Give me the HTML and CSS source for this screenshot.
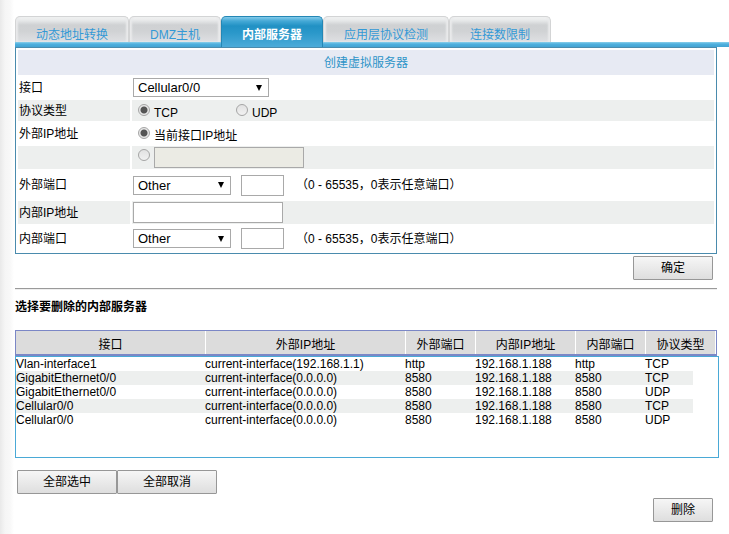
FILE: index.html
```html
<!DOCTYPE html>
<html lang="zh-CN">
<head>
  <meta charset="UTF-8" />
  <meta name="viewport" content="width=device-width, initial-scale=1.0"/>
  <title>内部服务器</title>
  <link rel="stylesheet" href="styles.css">
</head>
<body>
  <nav class="tabs">
    <a class="tab" href="#nat">动态地址转换</a>
    <a class="tab" href="#dmz">DMZ主机</a>
    <a class="tab active" href="#server">内部服务器</a>
    <a class="tab" href="#alg">应用层协议检测</a>
    <a class="tab" href="#limit">连接数限制</a>
  </nav>

  <main class="content">
    <form id="serverForm">
      <div class="panel">
        <h1 class="panel-title">创建虚拟服务器</h1>

        <div class="row">
          <label class="name" for="iface">接口</label>
          <div class="value">
            <select class="select wide" id="iface"><option>Cellular0/0</option></select>
          </div>
        </div>
        <div class="row shaded" role="radiogroup" aria-labelledby="protoName">
          <span class="name" id="protoName">协议类型</span>
          <div class="value">
            <label class="choice protocol"><input class="radio" type="radio" name="proto" checked><span class="choice-text">TCP</span></label>
            <label class="choice"><input class="radio" type="radio" name="proto"><span class="choice-text">UDP</span></label>
          </div>
        </div>
        <div class="row" role="group" aria-labelledby="extIpName">
          <span class="name" id="extIpName">外部IP地址</span>
          <div class="value">
            <label class="choice"><input class="radio" type="radio" name="extip" checked><span class="choice-text">当前接口IP地址</span></label>
          </div>
        </div>
        <div class="row shaded">
          <span class="name"></span>
          <div class="value">
            <div class="choice">
              <input class="radio" type="radio" name="extip" aria-label="外部IP地址">
              <input class="text" type="text" aria-label="外部IP地址" disabled>
            </div>
          </div>
        </div>
        <div class="row tall">
          <label class="name" for="extPort">外部端口</label>
          <div class="value">
            <select class="select" id="extPort"><option>Other</option></select>
            <input class="text port" type="text" aria-label="外部端口">
            <span class="hint">（0 - 65535，0表示任意端口）</span>
          </div>
        </div>
        <div class="row shaded">
          <label class="name" for="innerIp">内部IP地址</label>
          <div class="value">
            <input class="text" type="text" id="innerIp">
          </div>
        </div>
        <div class="row last">
          <label class="name" for="innerPort">内部端口</label>
          <div class="value">
            <select class="select" id="innerPort"><option>Other</option></select>
            <input class="text port" type="text" aria-label="内部端口">
            <span class="hint">（0 - 65535，0表示任意端口）</span>
          </div>
        </div>
      </div>
      <div class="actions">
        <button class="btn" type="button">确定</button>
      </div>
    </form>

    <hr class="line">
    <h2 class="list-title">选择要删除的内部服务器</h2>

    <table class="list-head">
      <colgroup><col><col class="c-ip"><col class="c-port"><col class="c-inner"><col class="c-port"><col class="c-proto"></colgroup>
      <tr>
        <th>接口</th>
        <th>外部IP地址</th>
        <th>外部端口</th>
        <th>内部IP地址</th>
        <th>内部端口</th>
        <th>协议类型</th>
      </tr>
    </table>
    <div class="list-box">
      <table class="list">
        <colgroup><col><col class="c-ip"><col class="c-port"><col class="c-inner"><col class="c-port"><col class="c-last"></colgroup>
        <tr><td>Vlan-interface1</td><td>current-interface(192.168.1.1)</td><td>http</td><td>192.168.1.188</td><td>http</td><td>TCP</td></tr>
        <tr><td>GigabitEthernet0/0</td><td>current-interface(0.0.0.0)</td><td>8580</td><td>192.168.1.188</td><td>8580</td><td>TCP</td></tr>
        <tr><td>GigabitEthernet0/0</td><td>current-interface(0.0.0.0)</td><td>8580</td><td>192.168.1.188</td><td>8580</td><td>UDP</td></tr>
        <tr><td>Cellular0/0</td><td>current-interface(0.0.0.0)</td><td>8580</td><td>192.168.1.188</td><td>8580</td><td>TCP</td></tr>
        <tr><td>Cellular0/0</td><td>current-interface(0.0.0.0)</td><td>8580</td><td>192.168.1.188</td><td>8580</td><td>UDP</td></tr>
      </table>
    </div>

    <div class="select-actions">
      <button class="btn long" type="button">全部选中</button>
      <button class="btn long" type="button">全部取消</button>
    </div>
    <div class="actions">
      <button class="btn short" type="button">删除</button>
    </div>
  </main>
</body>
</html>
```
FILE: styles.css
```css
* {
  box-sizing: border-box;
}

body {
  margin: 0;
  padding: 16px 0 0 15px;
  background: linear-gradient(to right, #e9e9e9, #f5f5f5 5px, #f8f8f8 10px, #fff 14px);
  font-family: "Liberation Sans", Arial, "Noto Sans CJK SC", sans-serif;
  font-size: 12px;
  line-height: 16px;
  color: #000;
}

/* tabs */
.tabs {
  display: flex;
  height: 31px;
  background: linear-gradient(#8ccfeb, #4fb0de 2px, #43a3d3) bottom / 100% 5px no-repeat;
}

.tab {
  height: 26px;
  padding: 10px 20px 0;
  border: 1px solid #d3d4d5;
  border-width: 1px 1px 0;
  border-radius: 5px 5px 0 0;
  background: linear-gradient(#f6f6f6, #e4e6e7 4px, #cfd1d3 8px, #d0d2d4 14px, #dfe0e3);
  box-shadow: inset 2px 0 2px #e9eaeb, inset -2px 0 2px #e9eaeb;
  color: #3399d6;
  text-decoration: none;
  white-space: nowrap;
}

.tab.active {
  height: 31px;
  border-color: #2487b5;
  background: linear-gradient(#83cbea, #45a9d6 4px, #2191c4 9px, #2b98ca 16px, #4cabd9);
  box-shadow: none;
  color: #fff;
  font-weight: bold;
}

.content {
  margin-right: 12px;
}

/* form */
.panel {
  display: flex;
  flex-direction: column;
  gap: 2px;
  padding: 2px;
  border: 1px solid #4a8bad;
  background: #fff;
}

.panel-title {
  margin: 0;
  padding-top: 1px;
  background: #e7eaf3;
  color: #2e94c8;
  font-size: 12px;
  font-weight: normal;
  line-height: 24px;
  text-align: center;
}

.row {
  display: grid;
  grid-template-columns: 112px 1fr;
  gap: 2px;
  min-height: 21px;
}

.row.tall {
  min-height: 28px;
}

.row.last {
  min-height: 25px;
}

.name,
.value {
  display: flex;
  align-items: center;
  padding: 0 1px;
}

.shaded .name,
.shaded .value {
  background: #edefee;
}

.choice {
  display: flex;
  gap: 4px;
  padding-left: 5px;
}

.choice.protocol {
  width: 98px;
}

.choice-text {
  padding-top: 4px;
}

.radio {
  appearance: none;
  width: 12px;
  height: 12px;
  margin: 3px 0 0;
  border: 1px solid #a5a5a5;
  border-radius: 50%;
  background: linear-gradient(#e2e2e2, #f1f1f1);
}

.radio:checked {
  background: radial-gradient(circle, #555 0 3px, #e8e8e8 4px);
}

.select {
  appearance: none;
  width: 98px;
  height: 19px;
  padding: 0 4px;
  border: 1px solid #a9a9a9;
  border-radius: 0;
  background: #fff url("data:image/svg+xml,%3Csvg xmlns='http://www.w3.org/2000/svg' width='6' height='6'%3E%3Cpath d='M0 0h6L3 6z'/%3E%3C/svg%3E") right 6px center no-repeat;
  color: #000;
  font: 13px "Liberation Sans", Arial, sans-serif;
}

.select.wide {
  width: 136px;
}

.text {
  width: 150px;
  height: 21px;
  margin: 1px 0;
  padding: 1px 4px;
  border: 1px solid #a9a9a9;
  background: #fff;
  font: 13px "Liberation Sans", Arial, sans-serif;
}

.text:disabled {
  background: #ebebe4;
}

.text.port {
  width: 43px;
  margin-left: 10px;
}

.hint {
  margin-left: 12px;
}

/* buttons */
.actions {
  display: flex;
  justify-content: flex-end;
  padding: 2px 4px 0;
}

.btn {
  width: 80px;
  height: 24px;
  padding: 0;
  border: 1px solid #979797;
  border-radius: 1px;
  background: linear-gradient(#f6f6f6, #dedede);
  color: #000;
  font: inherit;
}

.btn.long {
  width: 100px;
}

.btn.short {
  width: 60px;
}

.select-actions {
  display: flex;
  padding: 12px 2px 2px;
}

/* server list */
.line {
  margin: 8px 0;
  border: 0;
  border-top: 1px solid #9a9a9a;
  border-bottom: 1px solid #eee;
}

.list-title {
  margin: 0 0 14px;
  font-size: 12px;
  line-height: 18px;
}

.list-head,
.list {
  table-layout: fixed;
  border-spacing: 0;
}

.list-head {
  width: 100%;
  border: 1px solid #7b87c6;
  border-bottom-width: 2px;
}

.list-head th {
  height: 23px;
  padding: 5px 0 0;
  border-right: 1px solid #fff;
  background: #dcdcdc;
  font-weight: normal;
  line-height: 18px;
}

.c-ip {
  width: 200px;
}

.c-port {
  width: 70px;
}

.c-inner {
  width: 100px;
}

.c-proto {
  width: 70px;
}

.c-last {
  width: 48px;
}

.list-box {
  height: 102px;
  margin-right: -2px;
  padding-right: 25px;
  border: 1px solid #4aa9d6;
  background: #fff;
  overflow: auto;
}

.list {
  width: 100%;
}

.list td {
  padding: 0;
  line-height: 14px;
}

.list tr:nth-child(even) {
  background: #edefee;
}
```
